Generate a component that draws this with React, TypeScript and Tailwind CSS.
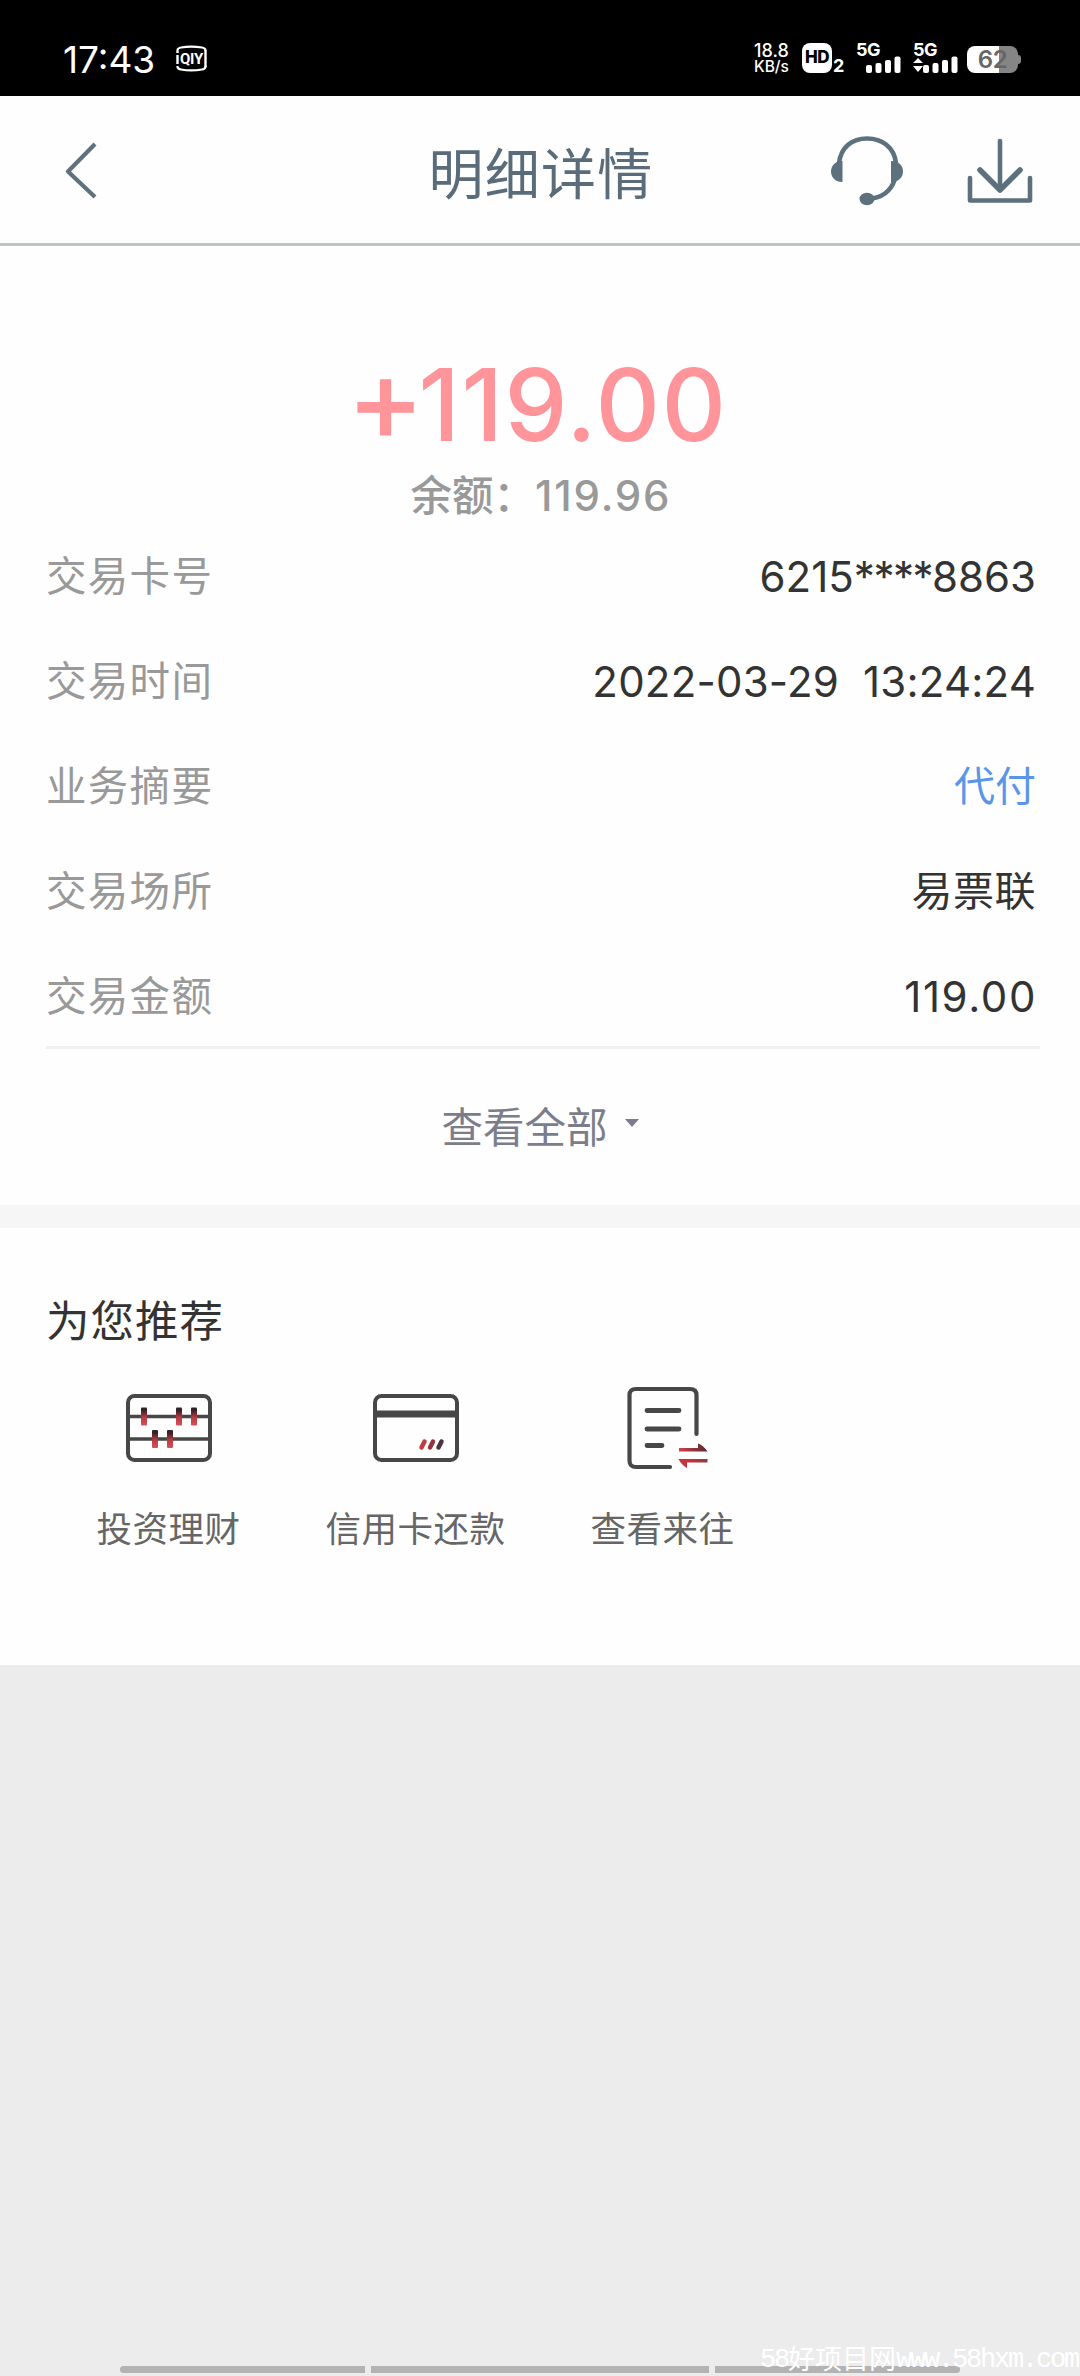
import type { ReactNode } from "react";

const CJK = "font-['Noto_Sans_CJK_SC',sans-serif]";
const NUM = "font-['Inter',sans-serif]";

function IqiyiBadge() {
  return (
    <svg width="31" height="27" viewBox="0 0 31 27" fill="none" className="overflow-visible">
      <path d="M1.5 6V5Q2 3 5 2.5Q15 0.600 26 2.500Q29 3 29.500 5V6" stroke="#fff" strokeWidth="2.200" />
      <path d="M1.500 21V22Q2 24 5 24.500Q15 26.400 26 24.500Q29 24 29.500 22V21" stroke="#fff" strokeWidth="2.200" />
      <path d="M1.500 6V8M1.500 10V19M29.500 5V22" stroke="#fff" strokeWidth="2.400" />
      <text x="4" y="19" fill="#fff" className="font-['Roboto',sans-serif] text-[15px] font-bold tracking-[-0.300px]">
        QIY
      </text>
    </svg>
  );
}

function Signal({ arrows }: { arrows?: boolean }) {
  return (
    <div className="flex h-[30px] w-[46px] flex-col">
      <span className="h-[14px] font-['Inter',sans-serif] text-[18px] leading-[14px] font-bold tracking-[-0.5px] text-white">5G</span>
      <svg width="46" height="17" viewBox="0 0 46 17" fill="#fff" className="-mt-px">
        {arrows && <path d="M0 7L5 2L10 7ZM0 10H10L5 16Z" />}
        <rect x="10" y="9" width="6" height="8" rx="2" />
        <rect x="19.500" y="7" width="6" height="10" rx="2" />
        <rect x="29" y="4" width="6" height="13" rx="2" />
        <rect x="38.500" y="0.500" width="6" height="16.500" rx="2" />
      </svg>
    </div>
  );
}

function StatusBar() {
  return (
    <div className="flex h-24 items-start bg-black pr-[59px] pl-[63px] text-white">
      <span className={`${NUM} mt-[41px] w-[113px] text-[37px] leading-[38px]`}>17:43</span>
      <div className="mt-[45px]">
        <IqiyiBadge />
      </div>
      <div className="mt-[43px] ml-auto flex items-start">
        <div className={`${NUM} flex w-[48px] flex-col font-medium`}>
          <span className="text-[18px] leading-[15px]">18.8</span>
          <span className="text-[15.500px] leading-[18px]">KB/s</span>
        </div>
        <div className="flex w-[54px] items-end">
          <span className={`${NUM} flex h-[30px] w-[30px] items-center justify-center rounded-[8px] bg-white text-[17px] font-extrabold tracking-[-0.5px] text-black`}>
            HD
          </span>
          <span className={`${NUM} ml-px text-[18px] leading-[14px] font-bold`}>2</span>
        </div>
        <Signal />
        <div className="ml-[11px]">
          <Signal arrows />
        </div>
        <div className="mt-[3px] ml-[8px] flex items-center">
          <div className="flex h-[27px] w-[51px] items-center justify-center rounded-[8px] bg-linear-to-r from-white from-63% to-[#858585] to-63%">
            <span className={`${NUM} text-[24px] leading-[27px] font-semibold tracking-[-0.5px] text-[#666]`}>62</span>
          </div>
          <div className="h-[9px] w-[3px] rounded-r-[3px] bg-[#858585]" />
        </div>
      </div>
    </div>
  );
}

function Header() {
  return (
    <div className="grid h-[150px] grid-cols-[1fr_auto_1fr] items-center border-b-[3px] border-[#b9c5c6] bg-[#fefefe] px-[47px]">
      <svg width="54" height="60" viewBox="0 0 54 60" fill="none" className="ml-[16px]">
        <path d="M32 4L5 31.500L32 57" stroke="#5f717c" strokeWidth="4.200" strokeLinejoin="round" />
      </svg>
      <h1 className={`${CJK} pl-[2px] text-[55px] leading-[80px] tracking-[1.300px] text-[#5a6c7a]`}>明细详情</h1>
      <div className="flex items-center justify-end gap-[63px]">
        <svg width="74" height="74" viewBox="0 0 74 74" fill="none">
          <path d="M9 30C11 14 22 5.500 37 5.500S64 14 66 30" stroke="#5c707e" strokeWidth="4.600" />
          <path d="M65 46C61 58 52 65.500 37 66" stroke="#5c707e" strokeWidth="4.400" />
          <path d="M12.500 28V49C5 49 1 44 1 38.500S5 28 12.500 28Z" fill="#5c707e" />
          <path d="M61 28C69 28 73 33 73 38.500S69 49 61 49Z" fill="#5c707e" />
          <ellipse cx="37" cy="66" rx="7.500" ry="6.200" fill="#5c707e" />
        </svg>
        <svg width="66" height="66" viewBox="0 0 66 66" fill="none" stroke="#5c707e" strokeWidth="4.600" strokeLinecap="round" strokeLinejoin="round">
          <path d="M33 4V52" />
          <path d="M13 33L33 53L53 33" strokeWidth="5.500" />
          <path d="M3 41V63.500H63V41" />
        </svg>
      </div>
    </div>
  );
}

function Row({ label, children }: { label: string; children: ReactNode }) {
  return (
    <div className="flex h-[105px] shrink-0 items-center justify-between">
      <span className={`${CJK} pb-[4px] text-[40.500px] tracking-[1.300px] text-[#999]`}>{label}</span>
      {children}
    </div>
  );
}

function Service({ label, children }: { label: string; children: ReactNode }) {
  return (
    <div className="flex w-[247px] flex-col items-center">
      <div className="flex h-[88px] items-center">{children}</div>
      <span className={`${CJK} mt-[30px] text-[35.500px] leading-[50px] tracking-[0.5px] text-[#666]`}>{label}</span>
    </div>
  );
}

function AbacusIcon() {
  return (
    <svg width="86" height="68" viewBox="0 0 86 68" fill="none">
      <defs>
        <linearGradient id="bead" x1="0" y1="0" x2="0" y2="1">
          <stop offset="0.150" stopColor="#332226" />
          <stop offset="0.550" stopColor="#bb3842" />
          <stop offset="1" stopColor="#d2545c" />
        </linearGradient>
      </defs>
      <rect x="2" y="2" width="82" height="64" rx="6.500" stroke="#474747" strokeWidth="4" />
      <path d="M3 22.500H83M3 45H83" stroke="#474747" strokeWidth="3.600" />
      <g fill="url(#bead)">
        <rect x="15" y="13.500" width="6" height="18" rx="1" />
        <rect x="50" y="13.500" width="6" height="18" rx="1" />
        <rect x="65" y="13.500" width="6" height="18" rx="1" />
        <rect x="26" y="36" width="6" height="18" rx="1" />
        <rect x="41" y="36" width="6" height="18" rx="1" />
      </g>
    </svg>
  );
}

function CardIcon() {
  return (
    <svg width="86" height="68" viewBox="0 0 86 68" fill="none">
      <rect x="2" y="2" width="82" height="64" rx="6.500" stroke="#474747" strokeWidth="4" />
      <path d="M3 20H83" stroke="#474747" strokeWidth="7" />
      <path d="M51.500 47.500L48.500 53.500" stroke="#c03c45" strokeWidth="4.500" strokeLinecap="round" />
      <path d="M60 47.500L57 53.500" stroke="#94353e" strokeWidth="4.500" strokeLinecap="round" />
      <path d="M68.500 47.500L65.500 53.500" stroke="#4b343a" strokeWidth="4.500" strokeLinecap="round" />
    </svg>
  );
}

function RecordIcon() {
  return (
    <svg width="82" height="84" viewBox="0 0 82 84" fill="none" className="ml-[10px]">
      <defs>
        <linearGradient id="swap" gradientUnits="userSpaceOnUse" x1="52" y1="0" x2="80" y2="0">
          <stop offset="0" stopColor="#d0414b" />
          <stop offset="1" stopColor="#5a2a30" />
        </linearGradient>
        <linearGradient id="swapBack" gradientUnits="userSpaceOnUse" x1="52" y1="0" x2="80" y2="0">
          <stop offset="0.300" stopColor="#c8323c" />
          <stop offset="1" stopColor="#8a4046" />
        </linearGradient>
      </defs>
      <path d="M43 81H9Q2.500 81 2.500 74.500V9Q2.500 3 9 3H63Q69.500 3 69.500 9V48" stroke="#474747" strokeWidth="4.200" strokeLinecap="round" />
      <path d="M20 24.500H52M20 43H52M20 59.500H35" stroke="#474747" strokeWidth="4.800" strokeLinecap="round" />
      <path d="M52 62H71V57.500Q76 59 80.500 65.500H52Z" fill="url(#swap)" />
      <path d="M80.500 73H51.500Q54.500 79 60 82V76.500H80.500Z" fill="url(#swapBack)" />
    </svg>
  );
}

export default function App() {
  return (
    <div className="flex h-[2376px] w-[1080px] flex-col overflow-hidden bg-[#ececec]">
      <StatusBar />
      <Header />

      <div className="flex h-[959px] flex-col bg-[#fefefe]">
        <div className={`${NUM} mt-[99px] flex h-[120px] items-center justify-center pr-[6px] leading-[120px] font-medium text-[#ff949a]`}>
          <span className="-mt-[13px] text-[117px]">+</span>
          <span className="-ml-[6px] text-[100px] tracking-[1.500px]">119.00</span>
        </div>
        <div className="flex h-[59px] items-center justify-center pl-[2px] text-[#999]">
          <span className={`${CJK} pb-[3px] text-[41.500px] font-medium`}>余额：</span>
          <span className={`${NUM} pt-[2px] text-[42px] font-medium tracking-[1.800px]`}>119.96</span>
        </div>

        <div className="mr-[40px] ml-[46px] flex h-[525px] flex-col border-b-[3px] border-[#f0f0f0] pr-[4px]">
          <Row label="交易卡号">
            <span className={`${NUM} text-[42px] text-[#333]`}>
              6215<span className="tracking-[-1.500px]">****</span>8863
            </span>
          </Row>
          <Row label="交易时间">
            <span className={`${NUM} text-[42px] tracking-[0.200px] whitespace-pre text-[#333]`}>2022-03-29  13:24:24</span>
          </Row>
          <Row label="业务摘要">
            <span className={`${CJK} pb-[5px] text-[41px] text-[#5a96e8]`}>代付</span>
          </Row>
          <Row label="交易场所">
            <span className={`${CJK} pb-[5px] text-[41px] tracking-[0.500px] text-[#333]`}>易票联</span>
          </Row>
          <Row label="交易金额">
            <span className={`${NUM} -mr-px text-[42px] tracking-[1.600px] text-[#333]`}>119.00</span>
          </Row>
        </div>

        <div className="flex h-[156px] items-center justify-center text-[#7c7d8b]">
          <span className={`${CJK} pb-[4px] text-[41.500px] leading-[60px]`}>查看全部</span>
          <svg width="14" height="8" viewBox="0 0 14 8" className="-mt-[8px] ml-[17px]">
            <path d="M0 0H14L7 8Z" fill="#7c7d8b" />
          </svg>
        </div>
      </div>

      <div className="h-[23px] bg-[#f6f6f6]" />

      <div className="h-[437px] bg-[#fefefe]">
        <h2 className={`${CJK} ml-[46px] pt-[61px] text-[43.500px] leading-[60px] tracking-[1px] text-[#333]`}>为您推荐</h2>
        <div className="mt-[35px] ml-[45px] flex">
          <Service label="投资理财">
            <AbacusIcon />
          </Service>
          <Service label="信用卡还款">
            <CardIcon />
          </Service>
          <Service label="查看来往">
            <RecordIcon />
          </Service>
        </div>
      </div>

      <div className="relative mt-auto flex h-[10px] gap-[6px] px-[120px]">
        <div className="h-[7px] w-[245px] rounded-l-full bg-[#b3b3b3]" />
        <div className="h-[7px] w-[338px] bg-[#b3b3b3]" />
        <div className="h-[7px] w-[245px] rounded-r-full bg-[#b3b3b3]" />
        <div className="absolute right-[2px] bottom-[-2px] flex items-center whitespace-nowrap text-white">
          <span className="font-['Liberation_Mono',monospace] text-[27px] leading-[32px] tracking-[-2.200px]">58</span>
          <span className={`${CJK} pb-[4px] text-[27px] leading-[32px]`}>好项目网</span>
          <span className="font-['Liberation_Mono',monospace] text-[27px] leading-[32px] tracking-[-2.200px]">www.58hxm.com</span>
        </div>
      </div>
    </div>
  );
}
